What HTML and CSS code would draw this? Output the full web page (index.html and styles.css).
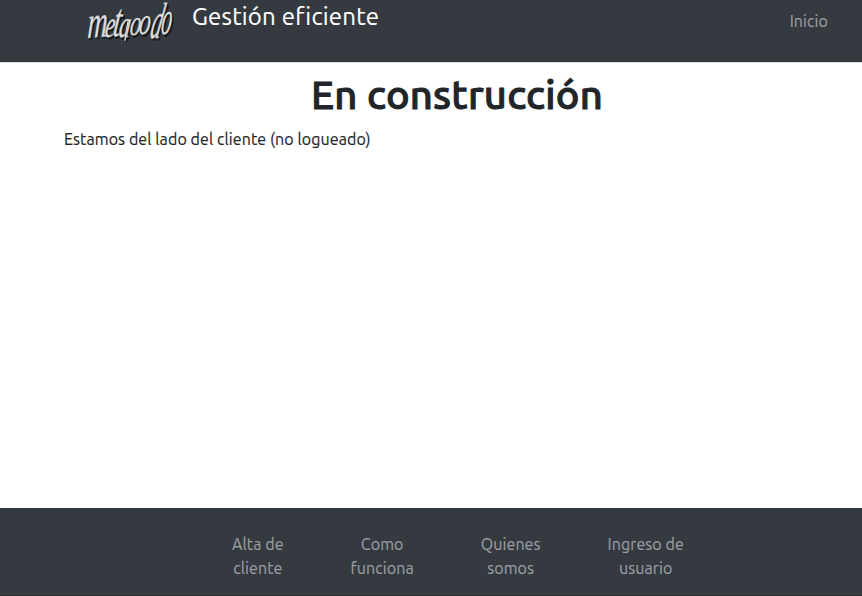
FILE: index.html
```html
<!DOCTYPE html>
<html lang="es">
<head>
<meta charset="utf-8">
<title>Gestión eficiente</title>
<link rel="stylesheet" href="styles.css">
</head>
<body>
<header class="navbar">
  <svg class="logo" width="92" height="46" viewBox="0 0 92 46" role="img" aria-label="metacodo">
    <defs>
      <g id="wordmark">
        <text transform="translate(3 38) rotate(-5) skewX(-8) scale(.62 1)" font-size="45">m</text>
        <text transform="translate(20 37) skewX(-8) scale(.6 1)" font-size="37">e</text>
        <text transform="translate(28 36) skewX(-8) scale(.7 1.2)" font-size="39">t</text>
        <text transform="translate(34 37) skewX(-8) scale(.6 1)" font-size="38">a</text>
        <path d="M44 22l-3 18" fill="none"/>
        <text transform="translate(45 35) skewX(-8) scale(.6 1)" font-size="36">o</text>
        <text transform="translate(54 34) skewX(-8) scale(.6 1)" font-size="38">o</text>
        <text transform="translate(65 38) skewX(-12) scale(.42 1)" font-size="51">d</text>
        <text transform="translate(76 34) skewX(-8) scale(.44 1)" font-size="47">o</text>
      </g>
    </defs>
    <use class="logo-shadow" href="#wordmark" x="1.5" y="1.5"/>
    <use class="logo-ink" href="#wordmark"/>
  </svg>
  <span class="brand">Gestión eficiente</span>
  <a class="link home">Inicio</a>
</header>
<main class="content">
  <h1 class="title">En construcción</h1>
  <p class="text">Estamos del lado del cliente (no logueado)</p>
</main>
<footer class="footer">
  <a class="link">Alta de<br>cliente</a>
  <a class="link">Como<br>funciona</a>
  <a class="link">Quienes<br>somos</a>
  <a class="link">Ingreso de<br>usuario</a>
</footer>
</body>
</html>
```
FILE: styles.css
```css
* { box-sizing: border-box; }
body {
  margin: 0;
  height: 596px;
  display: flex;
  flex-direction: column;
  overflow: hidden;
  background: #fff;
  color: #212529;
  font: 16px/24px Ubuntu, "Noto Sans", sans-serif;
  letter-spacing: .09px;
  -webkit-text-stroke: .15px currentColor;
}
.navbar {
  display: flex;
  align-items: flex-start;
  height: 63px;
  padding: 0 34px 0 84px;
  background: #343a40;
  border-bottom: 1px solid #dcdbe4;
}
.logo { display: block; overflow: visible; -webkit-text-stroke: 0; }
.logo text { font-family: "Liberation Serif", serif; font-style: italic; letter-spacing: 0; }
.logo-shadow { fill: #15191c; stroke: #15191c; stroke-width: .7; }
.logo-ink { fill: #dedede; stroke: #d0d0d0; stroke-width: .4; }
.logo path { stroke-width: 1.6; stroke-linecap: round; }
.brand {
  margin-left: 16px;
  padding-top: 1px;
  color: #fff;
  font-size: 24px;
  line-height: 32px;
  letter-spacing: .2px;
}
.link { color: #9a9da0; text-align: center; }
.home { margin: 9px 0 0 auto; }
.content { flex: 1; padding: 8px 12px 0 64px; }
.title {
  margin: 0 0 8px;
  font-size: 40px;
  line-height: 48px;
  font-weight: 500;
  text-align: center;
  letter-spacing: .2px;
  -webkit-text-stroke: 1px currentColor;
}
.text { margin: 0; }
.footer {
  display: flex;
  justify-content: center;
  height: 88px;
  padding: 24px 0 0 54px;
  background: #343a40;
  border-bottom: 1px solid #2c3035;
}
.footer .link + .link { margin-left: 67px; }
```
